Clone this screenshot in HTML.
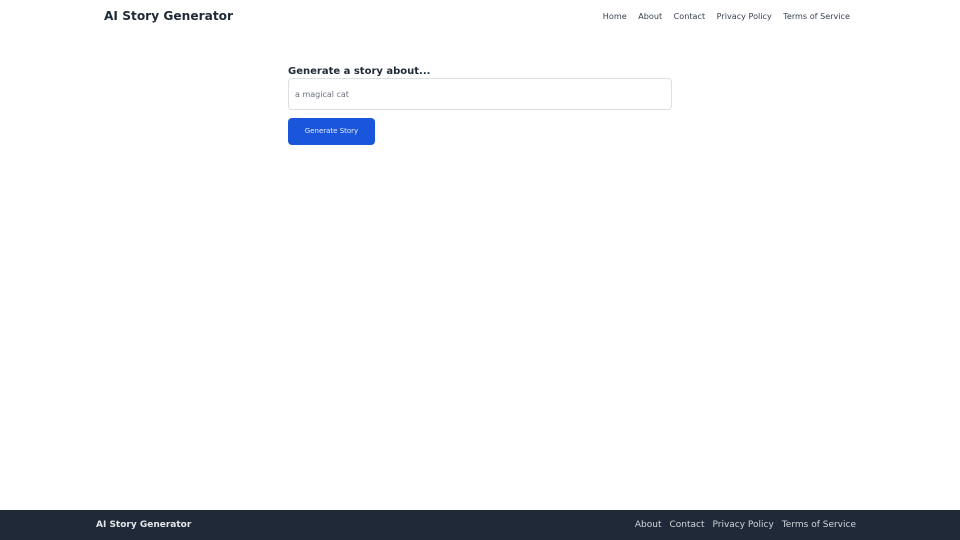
<!DOCTYPE html>
<html><head><meta charset="utf-8"><style>
*{margin:0;padding:0;box-sizing:border-box}
body{width:960px;height:540px;position:relative;background:#fff;font-family:"DejaVu Sans","Liberation Sans",sans-serif;overflow:hidden}
.logo{position:absolute;left:104px;top:9px;font-size:12.2px;font-weight:bold;color:#1f2937}
.nav{position:absolute;right:110px;top:11px;font-size:8.1px;color:#374151;display:flex;gap:11.5px}
.label{position:absolute;left:288px;top:66px;font-size:10px;font-weight:bold;color:#1f2937}
.input{position:absolute;left:288px;top:78px;width:384px;height:32px;border:1px solid #dcdfe4;border-radius:4px;font-size:8px;color:#6b7280;padding:11px 0 0 6px}
.btn{position:absolute;left:288px;top:118px;width:87px;height:27px;background:#1a56db;border-radius:4px;color:#e8eefc;font-size:7px;text-align:center;line-height:27px}
.footer{position:absolute;left:0;top:510px;width:960px;height:30px;background:#1f2937}
.flogo{position:absolute;left:96px;top:10px;font-size:9px;font-weight:bold;color:#e5e7eb}
.flinks{position:absolute;right:104px;top:10px;font-size:9px;color:#d1d5db;display:flex;gap:8px}
</style></head><body>
<div class="logo">AI Story Generator</div>
<div class="nav"><span>Home</span><span>About</span><span>Contact</span><span>Privacy Policy</span><span>Terms of Service</span></div>
<div class="label">Generate a story about...</div>
<div class="input">a magical cat</div>
<div class="btn">Generate Story</div>
<div class="footer"><div class="flogo">AI Story Generator</div>
<div class="flinks"><span>About</span><span>Contact</span><span>Privacy Policy</span><span>Terms of Service</span></div></div>
</body></html>
